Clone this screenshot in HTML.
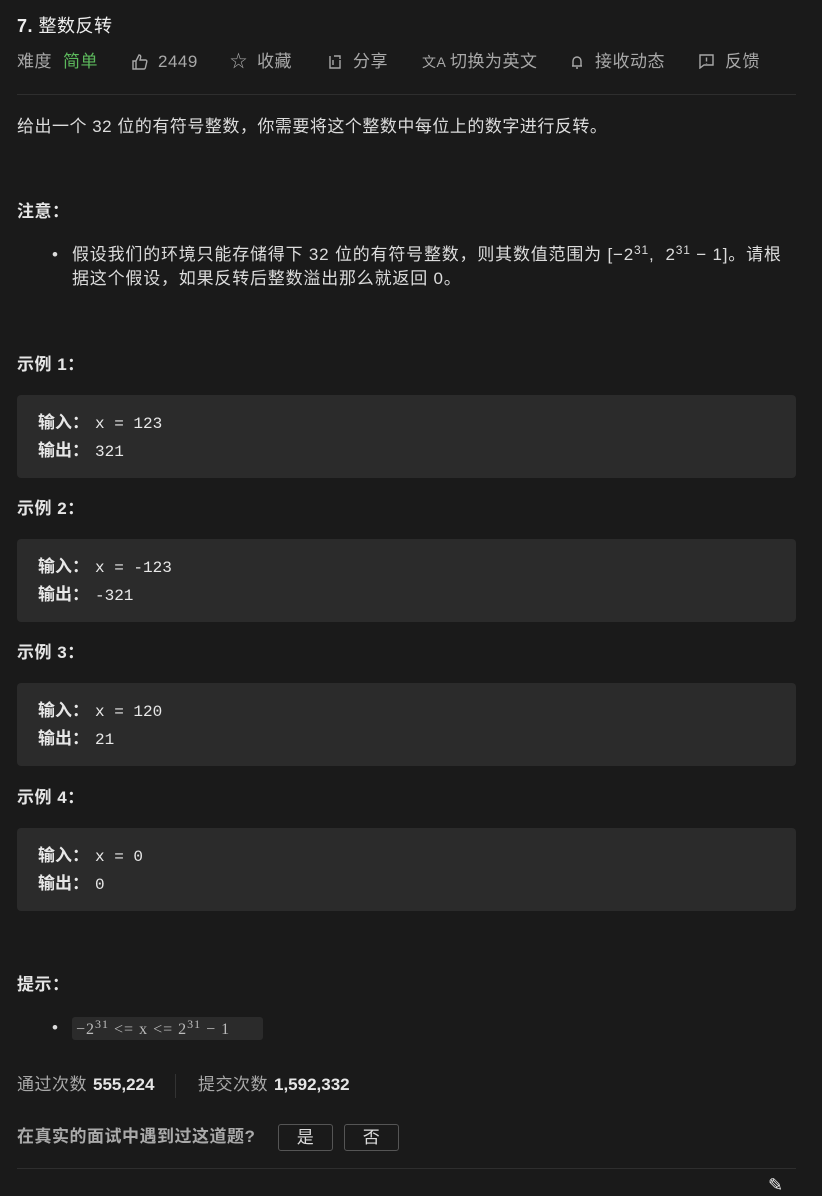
<!DOCTYPE html>
<html><head><meta charset="utf-8"><style>
body{margin:0;width:822px;height:1188px;background:#1a1a1a;color:#dcdcdc;font-family:"Liberation Sans","Noto Sans CJK SC",sans-serif;font-size:17px;letter-spacing:0.5px;position:relative;overflow:hidden}
.a{position:absolute;white-space:nowrap;line-height:22px}
.b{font-weight:bold;color:#e6e6e6}
.pre{position:absolute;left:17px;width:779px;height:83px;background:#2b2b2b;border-radius:4px;letter-spacing:0}
.pre div{position:absolute;left:21px;line-height:22px;font-family:"Liberation Mono","Noto Sans CJK SC",monospace;font-size:16px;color:#e8e8e8}
.pre b{display:inline-block;width:57px;font-family:"Liberation Sans","Noto Sans CJK SC",sans-serif;font-size:17px}
.m{color:#a8a8a8}
.hr{position:absolute;left:17px;width:779px;height:1px;background:#2e2e2e}
.btn{position:absolute;top:1124px;height:25px;border:1px solid #555;border-radius:3px;text-align:center;line-height:25px;color:#ddd;font-size:17px}
sup{font-size:12px;line-height:0;vertical-align:6px}
</style></head><body>
<div class="a b" style="left:17px;top:15px;font-size:18px;font-weight:normal;color:#eee"><b>7.</b> 整数反转</div>
<div class="a m" style="left:17px;top:51px">难度</div>
<div class="a" style="left:63px;top:51px;color:#5cb85c">简单</div>
<svg class="a" style="left:131px;top:53px" width="18" height="18" viewBox="0 0 18 18" fill="none" stroke="#a8a8a8" stroke-width="1.4"><path d="M2 8h3v8H2zM5 8l3-6c1.5 0 2 1 1.6 2.5L9 7h5.5c1 0 1.5.8 1.3 1.6l-1.4 6c-.2.8-.8 1.4-1.6 1.4H5"/></svg>
<div class="a m" style="left:158px;top:51px">2449</div>
<div class="a m" style="left:230px;top:51px">☆</div>
<div class="a m" style="left:257px;top:51px">收藏</div>
<svg class="a" style="left:327px;top:54px" width="16" height="16" viewBox="0 0 16 16" fill="none" stroke="#a8a8a8" stroke-width="1.4"><path d="M3 2v12h10V6M7 2h6v3M6 6v5"/></svg>
<div class="a m" style="left:353px;top:51px">分享</div>
<div class="a m" style="left:422px;top:51px;font-size:14px">文A</div>
<div class="a m" style="left:450px;top:51px">切换为英文</div>
<svg class="a" style="left:570px;top:54px" width="14" height="16" viewBox="0 0 14 16" fill="none" stroke="#a8a8a8" stroke-width="1.4"><path d="M3 12V7a4 4 0 0 1 8 0v5H2h10M6 14h2"/></svg>
<div class="a m" style="left:595px;top:51px">接收动态</div>
<svg class="a" style="left:698px;top:53px" width="17" height="16" viewBox="0 0 17 16" fill="none" stroke="#a8a8a8" stroke-width="1.4"><path d="M2 2h13v10H6l-4 3z M8.5 4.5v4M8.5 10v.5"/></svg>
<div class="a m" style="left:725px;top:51px">反馈</div>
<div class="hr" style="top:94px"></div>
<div class="a" style="left:17px;top:116px">给出一个 32 位的有符号整数，你需要将这个整数中每位上的数字进行反转。</div>
<div class="a b" style="left:17px;top:201px">注意：</div>
<div class="a" style="left:52px;top:244px">•</div>
<div class="a" style="left:72px;top:244px;letter-spacing:0.8px">假设我们的环境只能存储得下 32 位的有符号整数，则其数值范围为 [−2<sup>31</sup>,&nbsp; 2<sup>31</sup> − 1]。请根</div>
<div class="a" style="left:72px;top:268px;letter-spacing:0.8px">据这个假设，如果反转后整数溢出那么就返回 0。</div>
<div class="a b" style="left:17px;top:354px">示例 1：</div>
<div class="pre" style="top:395px"><div style="top:17px"><b>输入：</b>x = 123</div><div style="top:45px"><b>输出：</b>321</div></div>
<div class="a b" style="left:17px;top:498px">示例 2：</div>
<div class="pre" style="top:539px"><div style="top:17px"><b>输入：</b>x = -123</div><div style="top:45px"><b>输出：</b>-321</div></div>
<div class="a b" style="left:17px;top:642px">示例 3：</div>
<div class="pre" style="top:683px"><div style="top:17px"><b>输入：</b>x = 120</div><div style="top:45px"><b>输出：</b>21</div></div>
<div class="a b" style="left:17px;top:787px">示例 4：</div>
<div class="pre" style="top:828px"><div style="top:17px"><b>输入：</b>x = 0</div><div style="top:45px"><b>输出：</b>0</div></div>
<div class="a b" style="left:17px;top:974px">提示：</div>
<div class="a" style="left:52px;top:1017px">•</div>
<div class="a" style="left:72px;top:1017px;height:23px;padding:0 4px;background:#2b2b2b;border-radius:3px;font-family:'Liberation Serif',serif;color:#bbb;font-size:16px;letter-spacing:1px;line-height:25px;width:183px">−2<sup>31</sup> &lt;= x &lt;= 2<sup>31</sup> − 1</div>
<div class="a m" style="left:17px;top:1074px">通过次数</div>
<div class="a b" style="left:93px;top:1074px;letter-spacing:0">555,224</div>
<div class="a" style="left:175px;top:1074px;width:1px;height:24px;background:#333"></div>
<div class="a m" style="left:198px;top:1074px">提交次数</div>
<div class="a b" style="left:274px;top:1074px;letter-spacing:0">1,592,332</div>
<div class="a b" style="left:17px;top:1126px;color:#aaa">在真实的面试中遇到过这道题?</div>
<div class="btn" style="left:278px;width:53px">是</div>
<div class="btn" style="left:344px;width:53px">否</div>
<div class="hr" style="top:1168px"></div>
<div class="a" style="left:768px;top:1174px;color:#eee;font-size:18px">✎</div>
</body></html>
